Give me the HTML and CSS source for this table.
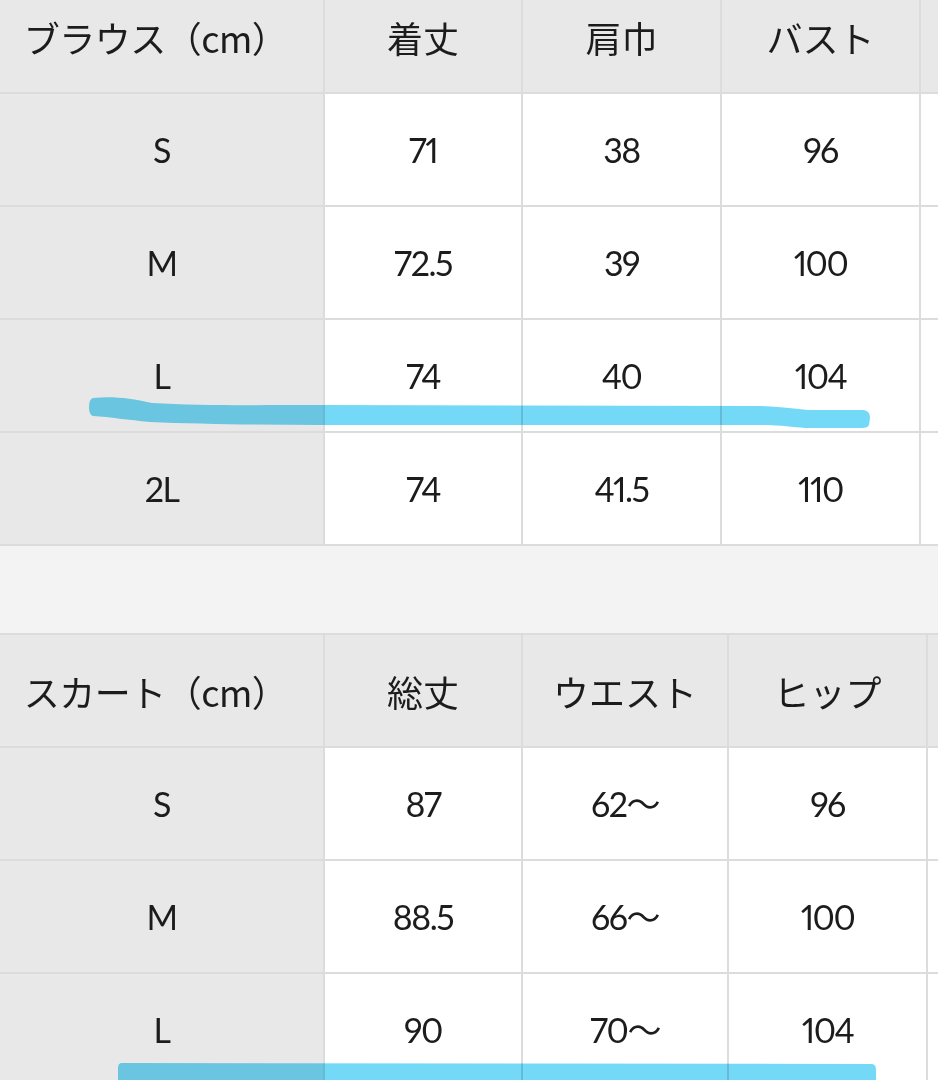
FILE: index.html
```html
<!DOCTYPE html>
<html lang="ja">
<head>
<meta charset="utf-8">
<title>サイズ表</title>
<link rel="stylesheet" href="styles.css">
</head>
<body>
<div class="page">
  <div class="sheet sheet-blouse">
    <div class="cell head first">ブラウス（cm）</div>
    <div class="cell head">着丈</div>
    <div class="cell head">肩巾</div>
    <div class="cell head">バスト</div>
    <div class="cell head"></div>

    <div class="cell first">S</div>
    <div class="cell">71</div>
    <div class="cell">38</div>
    <div class="cell">96</div>
    <div class="cell"></div>

    <div class="cell first">M</div>
    <div class="cell">72.5</div>
    <div class="cell">39</div>
    <div class="cell">100</div>
    <div class="cell"></div>

    <div class="cell first">L</div>
    <div class="cell">74</div>
    <div class="cell">40</div>
    <div class="cell">104</div>
    <div class="cell"></div>

    <div class="cell first">2L</div>
    <div class="cell">74</div>
    <div class="cell">41.5</div>
    <div class="cell">110</div>
    <div class="cell"></div>
  </div>

  <div class="spacer"></div>

  <div class="sheet sheet-skirt">
    <div class="cell head first">スカート（cm）</div>
    <div class="cell head">総丈</div>
    <div class="cell head">ウエスト</div>
    <div class="cell head">ヒップ</div>
    <div class="cell head"></div>

    <div class="cell first">S</div>
    <div class="cell">87</div>
    <div class="cell">62〜</div>
    <div class="cell">96</div>
    <div class="cell"></div>

    <div class="cell first">M</div>
    <div class="cell">88.5</div>
    <div class="cell">66〜</div>
    <div class="cell">100</div>
    <div class="cell"></div>

    <div class="cell first">L</div>
    <div class="cell">90</div>
    <div class="cell">70〜</div>
    <div class="cell">104</div>
    <div class="cell"></div>
  </div>

  <svg class="marker" width="938" height="1100" viewBox="0 0 938 1100" aria-hidden="true">
    <path d="M93,398 C112,396 130,398 152,403 C200,406 260,405 320,405 L760,406 C785,407 795,409 808,410 L864,410 Q870,411 870,418 L869,425 Q868,428 862,428 L805,428 C792,427 782,425 760,425 L320,425 C260,425 200,424 150,422 C128,420 110,417 93,416 Q89,415 89,407 Q89,399 93,398 Z" />
    <path d="M122,1063 L872,1064 Q876,1064 876,1070 L876,1100 L118,1100 L118,1068 Q118,1063 122,1063 Z" />
  </svg>
</div>
</body>
</html>
```

FILE: styles.css
```css
html, body {
  margin: 0;
  padding: 0;
}

body {
  background: #f3f3f3;
  font-family: "Lato", "Noto Sans CJK JP", sans-serif;
  color: #1c1c1c;
  overflow: hidden;
}

.page {
  position: relative;
  width: 938px;
  height: 1080px;
  overflow: hidden;
}

.sheet {
  display: grid;
  gap: 2px;
  background: #dcdcdc;
  width: 960px;
  grid-auto-rows: 111px;
}

.sheet-blouse {
  margin-top: -19px;
  padding-bottom: 2px;
  grid-template-columns: 323px 196px 197px 197px 1fr;
}

.sheet-skirt {
  padding-top: 2px;
  grid-template-columns: 323px 196px 204px 197px 1fr;
}

.spacer {
  height: 87px;
}

.cell {
  background: #ffffff;
  display: flex;
  align-items: center;
  justify-content: center;
  font-size: 34px;
  font-weight: 400;
  font-variant-numeric: proportional-nums;
  letter-spacing: -1.5px;
  line-height: 1;
}

.head {
  background: #e8e8e8;
  font-family: "Noto Sans CJK JP", "Lato", sans-serif;
  font-size: 36px;
  letter-spacing: 0;
}

.first {
  background: #e8e8e8;
}

.head.first {
  padding-right: 12px;
  font-family: "Noto Sans CJK JP", sans-serif;
  letter-spacing: -0.5px;
}

.marker {
  position: absolute;
  left: 0;
  top: 0;
  pointer-events: none;
  mix-blend-mode: multiply;
}

.marker path {
  fill: #74d9f7;
}
```
